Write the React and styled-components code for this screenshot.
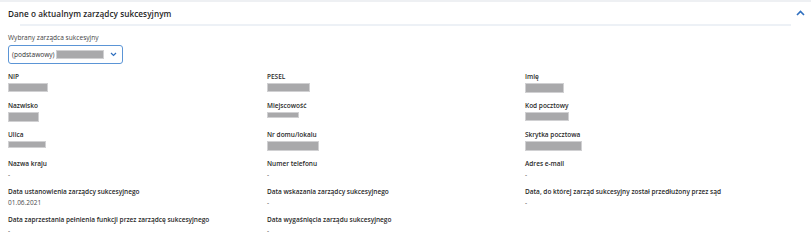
import styled, { createGlobalStyle } from "styled-components";

const GlobalStyle = createGlobalStyle`
  html, body {
    margin: 0;
    padding: 0;
    background: #fff;
    font-family: "Open Sans", "Noto Sans", sans-serif;
    color: #222;
  }
`;

const Panel = styled.section`
  width: 811px;
  height: 244px;
  border-top: 2px solid #eef0f3;
  box-sizing: border-box;
  overflow: hidden;
`;

const Header = styled.div`
  display: flex;
  align-items: center;
  justify-content: space-between;
  height: 22px;
  padding: 0 6px 0 8px;
`;

const Title = styled.h2`
  margin: 0;
  font-size: 8.2px;
  font-weight: 600;
  color: #1f1f1f;
  letter-spacing: 0.05px;
`;

const Divider = styled.div`
  height: 2px;
  margin: 0 20px 0 20px;
  background: #edf1f6;
`;

const Body = styled.div`
  padding: 7px 8px 0 8px;
`;

const SelectLabel = styled.div`
  font-size: 6.6px;
  color: #444;
  margin-bottom: 3px;
`;

const Select = styled.div`
  display: flex;
  align-items: center;
  width: 115px;
  height: 19px;
  box-sizing: border-box;
  border: 1px solid #5b95d6;
  border-radius: 3px;
  padding: 0 5px 0 3px;
  font-size: 6.6px;
  color: #333;
  gap: 1px;
`;

const Chevron = styled.svg`
  margin-left: auto;
  display: block;
`;

const Masked = styled.span`
  display: block;
  width: ${(p) => p.$w}px;
  height: ${(p) => p.$h || 9}px;
  background: #a9a9ab;
  border: 1px solid #d0d0d2;
  box-sizing: border-box;
`;

const Grid = styled.div`
  display: grid;
  grid-template-columns: 259px 258px 1fr;
  row-gap: 8px;
  margin-top: 8px;
`;

const Field = styled.div`
  display: flex;
  flex-direction: column;
  gap: 2px;
  min-height: 20px;
`;

const Label = styled.div`
  font-size: 6.5px;
  font-weight: 600;
  color: #2a2a2a;
  line-height: 9px;
  white-space: nowrap;
`;

const Value = styled.div`
  font-size: 6.5px;
  color: #4a4a4a;
  line-height: 9px;
`;

const fields = [
  { label: "NIP", mask: [40, 9] },
  { label: "PESEL", mask: [43, 9] },
  { label: "Imię", mask: [39, 10] },
  { label: "Nazwisko", mask: [31, 10] },
  { label: "Miejscowość", mask: [32, 6] },
  { label: "Kod pocztowy", mask: [44, 9] },
  { label: "Ulica", mask: [38, 7] },
  { label: "Nr domu/lokalu", mask: [52, 10] },
  { label: "Skrytka pocztowa", mask: [57, 10] },
  { label: "Nazwa kraju", value: "-" },
  { label: "Numer telefonu", value: "-" },
  { label: "Adres e-mail", value: "-" },
  { label: "Data ustanowienia zarządcy sukcesyjnego", value: "01.06.2021" },
  { label: "Data wskazania zarządcy sukcesyjnego", value: "-" },
  { label: "Data, do której zarząd sukcesyjny został przedłużony przez sąd", value: "-" },
  { label: "Data zaprzestania pełnienia funkcji przez zarządcę sukcesyjnego", value: "-" },
  { label: "Data wygaśnięcia zarządu sukcesyjnego", value: "-" },
];

export default function App() {
  return (
    <>
      <GlobalStyle />
      <Panel>
        <Header>
          <Title>Dane o aktualnym zarządcy sukcesyjnym</Title>
          <svg width="9" height="6" viewBox="0 0 9 6">
            <path d="M1 5 L4.5 1.5 L8 5" fill="none" stroke="#2f6fbf" strokeWidth="1.6" />
          </svg>
        </Header>
        <Divider />
        <Body>
          <SelectLabel>Wybrany zarządca sukcesyjny</SelectLabel>
          <Select>
            <span>(podstawowy)</span>
            <Masked $w={48} $h={9} />
            <Chevron width="7" height="5" viewBox="0 0 7 5">
              <path d="M1 1 L3.5 3.5 L6 1" fill="none" stroke="#2f6fbf" strokeWidth="1.2" />
            </Chevron>
          </Select>
          <Grid>
            {fields.map((f) => (
              <Field key={f.label}>
                <Label>{f.label}</Label>
                {f.mask ? <Masked $w={f.mask[0]} $h={f.mask[1]} /> : <Value>{f.value}</Value>}
              </Field>
            ))}
          </Grid>
        </Body>
      </Panel>
    </>
  );
}
